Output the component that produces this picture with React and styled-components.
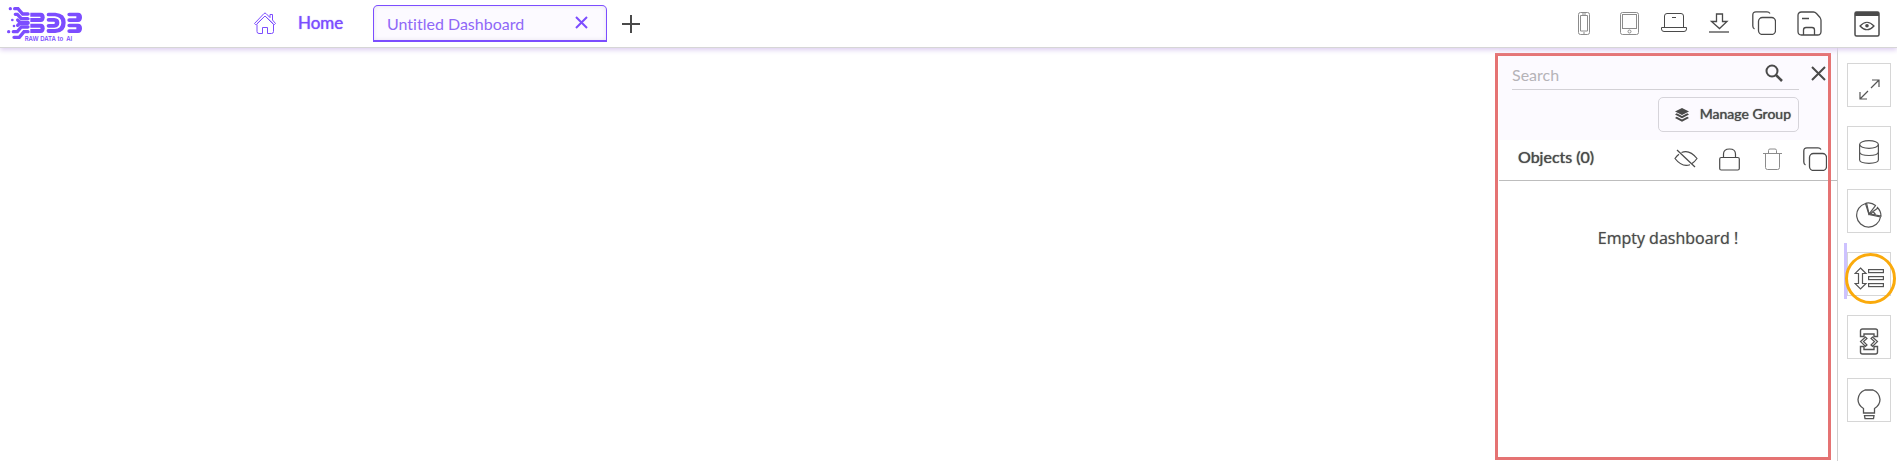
import React, { useState } from "react";
import styled, { createGlobalStyle } from "styled-components";

const GlobalStyle = createGlobalStyle`
  *,
  *::before,
  *::after {
    box-sizing: border-box;
  }

  body {
    margin: 0;
    background: #fff;
    color: #4a4a4a;
    font-family: Lato, "Open Sans", sans-serif;
    font-size: 16px;
    font-variant-ligatures: none;
  }

  button,
  input {
    font: inherit;
    color: inherit;
  }

  svg {
    display: block;
    flex: none;
  }
`;

const Page = styled.div`
  display: flex;
  flex-direction: column;
  min-height: 100vh;
`;

const Header = styled.header`
  display: flex;
  align-items: center;
  height: 48px;
  padding: 0 17px 0 6px;
  background: #fff;
  border-bottom: 1px solid #d6d6d6;
  box-shadow: 0 2px 5px #dccdf0;
  position: relative;
  z-index: 2;
`;

const LogoLink = styled.a`
  width: 247px;
  padding-top: 1px;
  color: #7c4dff;
`;

const HomeLink = styled.a`
  display: flex;
  align-items: center;
  gap: 21px;
  width: 120px;
  padding-bottom: 2px;
  color: #7c4dff;
  font-size: 17px;
  text-decoration: none;
  text-shadow: 0 0 1px #7c4dff;
`;

const Tab = styled.div`
  display: flex;
  align-items: center;
  justify-content: space-between;
  width: 234px;
  height: 37px;
  padding: 0 12px 0 13px;
  border: 1px solid #7c4dff;
  border-bottom-width: 2px;
  border-radius: 5px 5px 0 0;
  background: #fcfaff;
  box-shadow: inset 0 0 4px #e6e2ee;
  color: #7c4dff;
`;

const TabTitle = styled.span`
  color: #8f68f7;
`;

const IconButton = styled.button`
  display: flex;
  align-items: center;
  justify-content: center;
  width: ${({ $size }) => $size || 26}px;
  height: 26px;
  padding: 0;
  border: none;
  background: none;
  color: ${({ $soft }) => ($soft ? "#8c8c8c" : "#4a4a4a")};
  cursor: pointer;
`;

const AddButton = styled(IconButton)`
  margin-left: 11px;
`;

const TabClose = styled(IconButton)`
  padding-bottom: 2px;
  color: #7c4dff;
`;

const Tools = styled.div`
  display: flex;
  align-items: center;
  gap: 19px;
  margin-left: auto;
  margin-right: 32px;
  padding-bottom: 1px;
`;

const Body = styled.div`
  display: flex;
  flex: 1;
`;

const Canvas = styled.main`
  flex: 1;
`;

const Panel = styled.aside`
  display: flex;
  flex-direction: column;
  width: 338px;
  position: relative;
`;

const PanelTop = styled.div`
  display: flex;
  align-items: flex-start;
  gap: 8px;
  height: 92px;
  padding: 12px 8px 0 13px;
  background: #fcfaff;
`;

const SearchArea = styled.div`
  flex: 1;
  display: flex;
  flex-direction: column;
  align-items: flex-end;
  gap: 7px;
`;

const SearchRow = styled.label`
  display: flex;
  align-items: center;
  width: 100%;
  height: 30px;
  padding: 0 12px 3px 0;
  border-bottom: 1px solid #d3d1d6;
`;

const SearchInput = styled.input`
  flex: 1;
  min-width: 0;
  padding: 3px 0 0;
  border: none;
  outline: none;
  background: none;

  &::placeholder {
    color: #b5b3b8;
  }
`;

const ManageButton = styled.button`
  display: flex;
  align-items: center;
  gap: 11px;
  height: 35px;
  padding: 0 7px 0 16px;
  border: 1px solid #d6d4da;
  border-radius: 5px;
  background: #fcfaff;
  font-size: 14px;
  text-shadow: 0 0 1px #4a4a4a;
  white-space: nowrap;
  cursor: pointer;
`;

const ManageLabel = styled.span`
  padding-bottom: 2px;
`;

const ObjectsRow = styled.div`
  display: flex;
  align-items: center;
  justify-content: space-between;
  height: 41px;
  padding: 0 9px 2px 19px;
  border-bottom: 1px solid #bdbdbd;
`;

const ObjectsTitle = styled.h2`
  margin: 0;
  padding-bottom: 6px;
  font-size: 16px;
  font-weight: 400;
  text-shadow: 0 0 1px #4a4a4a;
`;

const ObjectTools = styled.div`
  display: flex;
  gap: 17px;
`;

const EmptyText = styled.p`
  margin: 0;
  padding-top: 46px;
  font-family: "Open Sans", sans-serif;
  font-size: 16px;
  line-height: 22px;
  text-align: center;
  text-shadow: 0 0 1px #8a8a8a;
`;

/* frame drawn over the whole panel */
const PanelFrame = styled.div`
  position: absolute;
  inset: 5px 6px 1px -4px;
  border: 3px solid #e57373;
  pointer-events: none;
`;

const SideNav = styled.nav`
  display: flex;
  flex-direction: column;
  align-items: center;
  gap: 19px;
  width: 60px;
  padding: 15px 0 0 3px;
  border-left: 1px solid #d0d0d0;
`;

const SideButton = styled.button`
  display: flex;
  align-items: center;
  justify-content: center;
  width: 44px;
  height: 44px;
  padding: 8px 0 0;
  border: 1px solid #d6d6d6;
  background: #fff;
  color: #555;
  cursor: pointer;
`;

const ActiveItem = styled.div`
  position: relative;

  &::before {
    content: "";
    position: absolute;
    left: -3px;
    top: -9px;
    width: 3px;
    height: 56px;
    background: #cdc2ff;
  }

  &::after {
    content: "";
    position: absolute;
    left: -2px;
    top: 1px;
    width: 51px;
    height: 51px;
    border: 3px solid #faaa0c;
    border-radius: 50%;
    pointer-events: none;
  }
`;

const Icon = ({ w, h, sw = 1, children }) => (
  <svg
    width={w}
    height={h}
    viewBox={`0 0 ${w} ${h}`}
    fill="none"
    stroke="currentColor"
    strokeWidth={sw}
    aria-hidden="true"
  >
    {children}
  </svg>
);

const Logo = () => (
  <svg width="80" height="40" viewBox="18 12 240 120" role="img" aria-label="BDB">
    <g fill="none" stroke="currentColor" strokeWidth="10" strokeLinecap="round">
      <path d="M44 26 H54 L68 42 H84" />
      <path d="M46 43 H52 L64 56 H84" />
      <path d="M53 60 L60 67 H84" />
      <path d="M53 76 L60 70 H84" />
      <path d="M40 95 H52 L64 81 H84" />
      <path d="M42 112 H58 L72 95 H84" />
    </g>
    <g fill="currentColor">
      <circle cx="31" cy="26" r="5" />
      <circle cx="37" cy="60" r="4" />
      <circle cx="42" cy="78" r="4" />
      <circle cx="26" cy="95" r="5" />
      <path d="M91 38 H122 Q134 38 134 52 Q134 66 122 66 H91Z" />
      <path d="M91 71 H122 Q134 71 134 85 Q134 99 122 99 H91Z" />
      <path d="M146 38 H166 Q197 40 197 68 Q197 97 166 99 H146 Q140 99 140 93 V91 Q140 87 146 87 H165 Q184 85 184 68 Q184 51 165 49 H146 Q140 49 140 44 Q140 38 146 38Z" />
      <path d="M146 54 H163 Q178 55 178 68 Q178 81 163 83 H146 Q140 83 140 77 Q140 72 146 72 H163 Q167 68 163 65 H146 Q140 65 140 59 Q140 54 146 54Z" />
      <path d="M208 38 H234 Q246 38 246 52 Q246 66 234 66 H208 Q202 66 202 60 Q202 55 208 55 H229 V49 H208 Q202 49 202 43 Q202 38 208 38Z" />
      <path d="M208 71 H234 Q246 71 246 85 Q246 99 234 99 H208 Q202 99 202 93 Q202 88 208 88 H229 V82 H208 Q202 82 202 76 Q202 71 208 71Z" />
    </g>
    <path d="M88 52 H120 M88 85 H120" stroke="#fff" strokeWidth="4" strokeLinecap="round" />
    <text x="74" y="123" fill="currentColor" fontFamily="Inter, sans-serif" fontSize="18" fontWeight="600">
      RAW DATA to&#160; AI
    </text>
  </svg>
);

const HomeIcon = () => (
  <Icon w={24} h={24}>
    <path d="M1.5 12.5 L11 2.5 Q12 1.6 13 2.5 L17 6.6 V3.5 H19.5 V9 L22.5 12.5 Q21.5 14 20.5 13.4 L12 5 L3.5 13.4 Q2.3 14 1.5 12.5Z" />
    <path d="M4 13.5 V20.5 Q4 22.5 6 22.5 H9.5 V16.5 H14.5 V22.5 H18.5 Q20.5 22.5 20.5 20.5 V13.5" />
    <path d="M4 12.8 L12 5 L20.5 13" />
  </Icon>
);

const CrossIcon = ({ size = 13 }) => (
  <Icon w={size} h={size} sw={2}>
    <path d={`M1 1 L${size - 1} ${size - 1} M${size - 1} 1 L1 ${size - 1}`} />
  </Icon>
);

const PlusIcon = () => (
  <Icon w={18} h={18} sw={2}>
    <path d="M9 0 V18 M0 9 H18" />
  </Icon>
);

const PhoneIcon = () => (
  <Icon w={12} h={23}>
    <rect x="0.5" y="0.5" width="11" height="22" rx="2" />
    <path d="M2.5 3.5 H9.5 V19 H2.5Z M4 2 H8 M5 21 H7" />
  </Icon>
);

const TabletIcon = () => (
  <Icon w={19} h={23}>
    <rect x="0.5" y="0.5" width="18" height="22" rx="2" />
    <rect x="2.5" y="2.5" width="14" height="14" />
    <circle cx="9.5" cy="19.5" r="1.5" />
  </Icon>
);

const LaptopIcon = () => (
  <Icon w={26} h={20}>
    <path d="M3.5 14.5 V3 Q3.5 0.5 6 0.5 H20 Q22.5 0.5 22.5 3 V14.5" />
    <path d="M0.5 14.5 H25.5 V16 Q25.5 18.5 23 18.5 H3 Q0.5 18.5 0.5 16Z M11 4.5 H15" />
  </Icon>
);

const DownloadIcon = () => (
  <Icon w={20} h={20} sw={1.3}>
    <path d="M7.5 1 H13.5 V8.5 H18 L10.5 15.5 L2.5 8.5 H7.5Z" />
    <path d="M0 19 H20" />
  </Icon>
);

const CopyIcon = () => (
  <Icon w={24} h={24} sw={1.3}>
    <rect x="6.5" y="6.5" width="17" height="17" rx="4" />
    <path d="M2.5 18 Q0.8 17 0.8 15 V4 Q0.8 0.8 4 0.8 H15 Q17 0.8 18 2.5" />
  </Icon>
);

const SaveIcon = () => (
  <Icon w={25} h={25} sw={1.3}>
    <path d="M4.5 1 H16.5 Q18 1 19.5 2.5 L23 6.5 Q24 8 24 9.5 V20.5 Q24 24 20.5 24 H4.5 Q1 24 1 20.5 V4.5 Q1 1 4.5 1Z" />
    <path d="M6.5 24 V19 Q6.5 16.5 9 16.5 H15 Q17.5 16.5 17.5 19 V24 M5 7.5 H12" />
  </Icon>
);

const PreviewIcon = () => (
  <Icon w={26} h={26} sw={1.5}>
    <rect x="1" y="1" width="24" height="24" rx="1.5" />
    <path d="M1 3 H25" strokeWidth="4" />
    <path d="M6 15 Q13 7.5 20 15 Q13 22.5 6 15Z" strokeWidth="1.2" />
    <circle cx="13" cy="14.8" r="1.8" fill="currentColor" stroke="none" />
  </Icon>
);

const SearchIcon = () => (
  <Icon w={18} h={18} sw={2}>
    <circle cx="7" cy="7" r="5.5" />
    <path d="M11 11 L17 17" strokeWidth="2.5" />
  </Icon>
);

const LayersIcon = () => (
  <Icon w={14} h={14} sw={0}>
    <g fill="currentColor">
      <path d="M7 0 L14 3.5 L7 7 L0 3.5Z" />
      <path d="M1.7 5.2 L7 8 L12.3 5.2 L14 6.6 L7 10.3 L0 6.6Z" />
      <path d="M1.7 8.7 L7 11.4 L12.3 8.7 L14 10.1 L7 13.8 L0 10.1Z" />
    </g>
  </Icon>
);

const HideIcon = () => (
  <Icon w={24} h={20} sw={1.2}>
    <path d="M7.5 3.500 Q15.500 0 23 9.500 Q20.500 13 18 14.500 M16 15.700 Q8 18.500 1 9.500 Q3 6.500 5 5.200" />
    <path d="M3 1 L21 18" />
  </Icon>
);

const LockIcon = () => (
  <Icon w={21} h={23} sw={1.2}>
    <rect x="0.7" y="9.5" width="19.6" height="12.5" rx="1.5" />
    <path d="M4.5 9.5 V6 Q4.5 1 10.5 1 Q16.5 1 16.5 6 V9.5" />
  </Icon>
);

const TrashIcon = () => (
  <Icon w={19} h={22}>
    <path d="M0 5.5 H19 M2.5 5.5 V19.5 Q2.5 21.5 4.5 21.5 H14.5 Q16.5 21.5 16.5 19.5 V5.5 M5.5 5.5 V2.5 Q5.5 1 7 1 H12 Q13.5 1 13.5 2.5 V5.5" />
  </Icon>
);

const ExpandIcon = () => (
  <Icon w={21} h={21} sw={1.2}>
    <path d="M12 9 L20 1 M13 1 H20 V8 M9 12 L1 20 M1 13 V20 H8" />
  </Icon>
);

const DatabaseIcon = () => (
  <Icon w={20} h={24} sw={1.2}>
    <ellipse cx="10" cy="4.5" rx="9.4" ry="3.8" />
    <path d="M0.6 4.5 V20 Q1 23.3 10 23.3 Q19 23.3 19.4 20 V4.5 M0.6 12 Q1 15.5 10 15.5 Q19 15.5 19.4 12" />
  </Icon>
);

const ChartIcon = () => (
  <Icon w={26} h={26} sw={1.2}>
    <path d="M9.5 1.5 A12 12 0 1 0 24.5 15 L13 12.5Z" />
    <path d="M10.5 1 Q15.5 0 19.5 3.5 L13 12Z M21 5 Q25 9 25 14 L14.5 12 L17 9.5 L22 6 M17 9.5 L19.5 12.5" />
  </Icon>
);

const ArrangeIcon = () => (
  <Icon w={30} h={23} sw={1.2}>
    <path d="M6.5 1 L12 6.5 H8.5 V16.5 H12 L6.5 22 L1 16.5 H4.5 V6.5 H1Z" />
    <rect x="14.6" y="2.6" width="14.8" height="3" />
    <rect x="14.6" y="9.6" width="14.8" height="3" />
    <rect x="14.6" y="16.6" width="14.8" height="3" />
  </Icon>
);

const ScriptIcon = () => (
  <Icon w={20} h={27} sw={1.4}>
    <path d="M1.5 8.5 V3 Q1.5 1 3.5 1 H16.5 Q18.5 1 18.5 3 V8.5 H15 V6 H5 V8.5Z" />
    <path d="M1.5 18.5 V24 Q1.5 26 3.5 26 H16.5 Q18.5 26 18.5 24 V18.5 H15 V21.5 H5 V18.5Z" />
    <path d="M6.5 9 L1.5 13.5 L6.5 18.5 L8 17 L4.5 13.5 L8 10.5Z M13.5 9 L18.5 13.5 L13.5 18.5 L12 17 L15.5 13.5 L12 10.5Z" strokeWidth="1.2" />
  </Icon>
);

const BulbIcon = () => (
  <Icon w={24} h={31} sw={1.3}>
    <path d="M6.5 24 V19.5 Q1 16 1 10.5 Q1.5 3.5 8 1 H16 Q22.5 3.5 23 10.5 Q23 16 17.5 19.5 V24Z" />
    <path d="M7.5 26.7 H17 L16.5 29.7 H8Z" />
  </Icon>
);

const tools = [
  { label: "Mobile view", icon: <PhoneIcon />, soft: true },
  { label: "Tablet view", icon: <TabletIcon />, soft: true },
  { label: "Desktop view", icon: <LaptopIcon /> },
  { label: "Download", icon: <DownloadIcon /> },
  { label: "Copy", icon: <CopyIcon /> },
  { label: "Save", icon: <SaveIcon /> },
];

const objectTools = [
  { label: "Hide", icon: <HideIcon /> },
  { label: "Lock", icon: <LockIcon /> },
  { label: "Delete", icon: <TrashIcon />, soft: true },
  { label: "Duplicate", icon: <CopyIcon /> },
];

const sideItems = [
  { label: "Full screen", icon: <ExpandIcon /> },
  { label: "Data", icon: <DatabaseIcon /> },
  { label: "Charts", icon: <ChartIcon /> },
  { label: "Arrange objects", icon: <ArrangeIcon />, active: true },
  { label: "Script", icon: <ScriptIcon /> },
  { label: "Hints", icon: <BulbIcon /> },
];

const App = () => {
  const [search, setSearch] = useState("");

  return (
    <Page>
      <GlobalStyle />
      <Header>
        <LogoLink href="#">
          <Logo />
        </LogoLink>
        <HomeLink href="#">
          <HomeIcon />
          Home
        </HomeLink>
        <Tab>
          <TabTitle>Untitled Dashboard</TabTitle>
          <TabClose type="button" aria-label="Close tab">
            <CrossIcon />
          </TabClose>
        </Tab>
        <AddButton type="button" aria-label="New tab">
          <PlusIcon />
        </AddButton>
        <Tools>
          {tools.map(({ label, icon, soft }) => (
            <IconButton key={label} type="button" aria-label={label} $soft={soft}>
              {icon}
            </IconButton>
          ))}
        </Tools>
        <IconButton type="button" aria-label="Preview">
          <PreviewIcon />
        </IconButton>
      </Header>
      <Body>
        <Canvas />
        <Panel>
          <PanelTop>
            <SearchArea>
              <SearchRow>
                <SearchInput
                  placeholder="Search"
                  aria-label="Search"
                  value={search}
                  onChange={(e) => setSearch(e.target.value)}
                />
                <IconButton type="button" aria-label="Find">
                  <SearchIcon />
                </IconButton>
              </SearchRow>
              <ManageButton type="button">
                <LayersIcon />
                <ManageLabel>Manage Group</ManageLabel>
              </ManageButton>
            </SearchArea>
            <IconButton type="button" aria-label="Close panel" $size={22}>
              <CrossIcon size={15} />
            </IconButton>
          </PanelTop>
          <ObjectsRow>
            <ObjectsTitle>Objects (0)</ObjectsTitle>
            <ObjectTools>
              {objectTools.map(({ label, icon, soft }) => (
                <IconButton key={label} type="button" aria-label={label} $soft={soft}>
                  {icon}
                </IconButton>
              ))}
            </ObjectTools>
          </ObjectsRow>
          <EmptyText>Empty dashboard !</EmptyText>
          <PanelFrame />
        </Panel>
        <SideNav>
          {sideItems.map(({ label, icon, active }) => {
            const button = (
              <SideButton key={label} type="button" aria-label={label}>
                {icon}
              </SideButton>
            );
            return active ? <ActiveItem key={label}>{button}</ActiveItem> : button;
          })}
        </SideNav>
      </Body>
    </Page>
  );
};

export default App;
